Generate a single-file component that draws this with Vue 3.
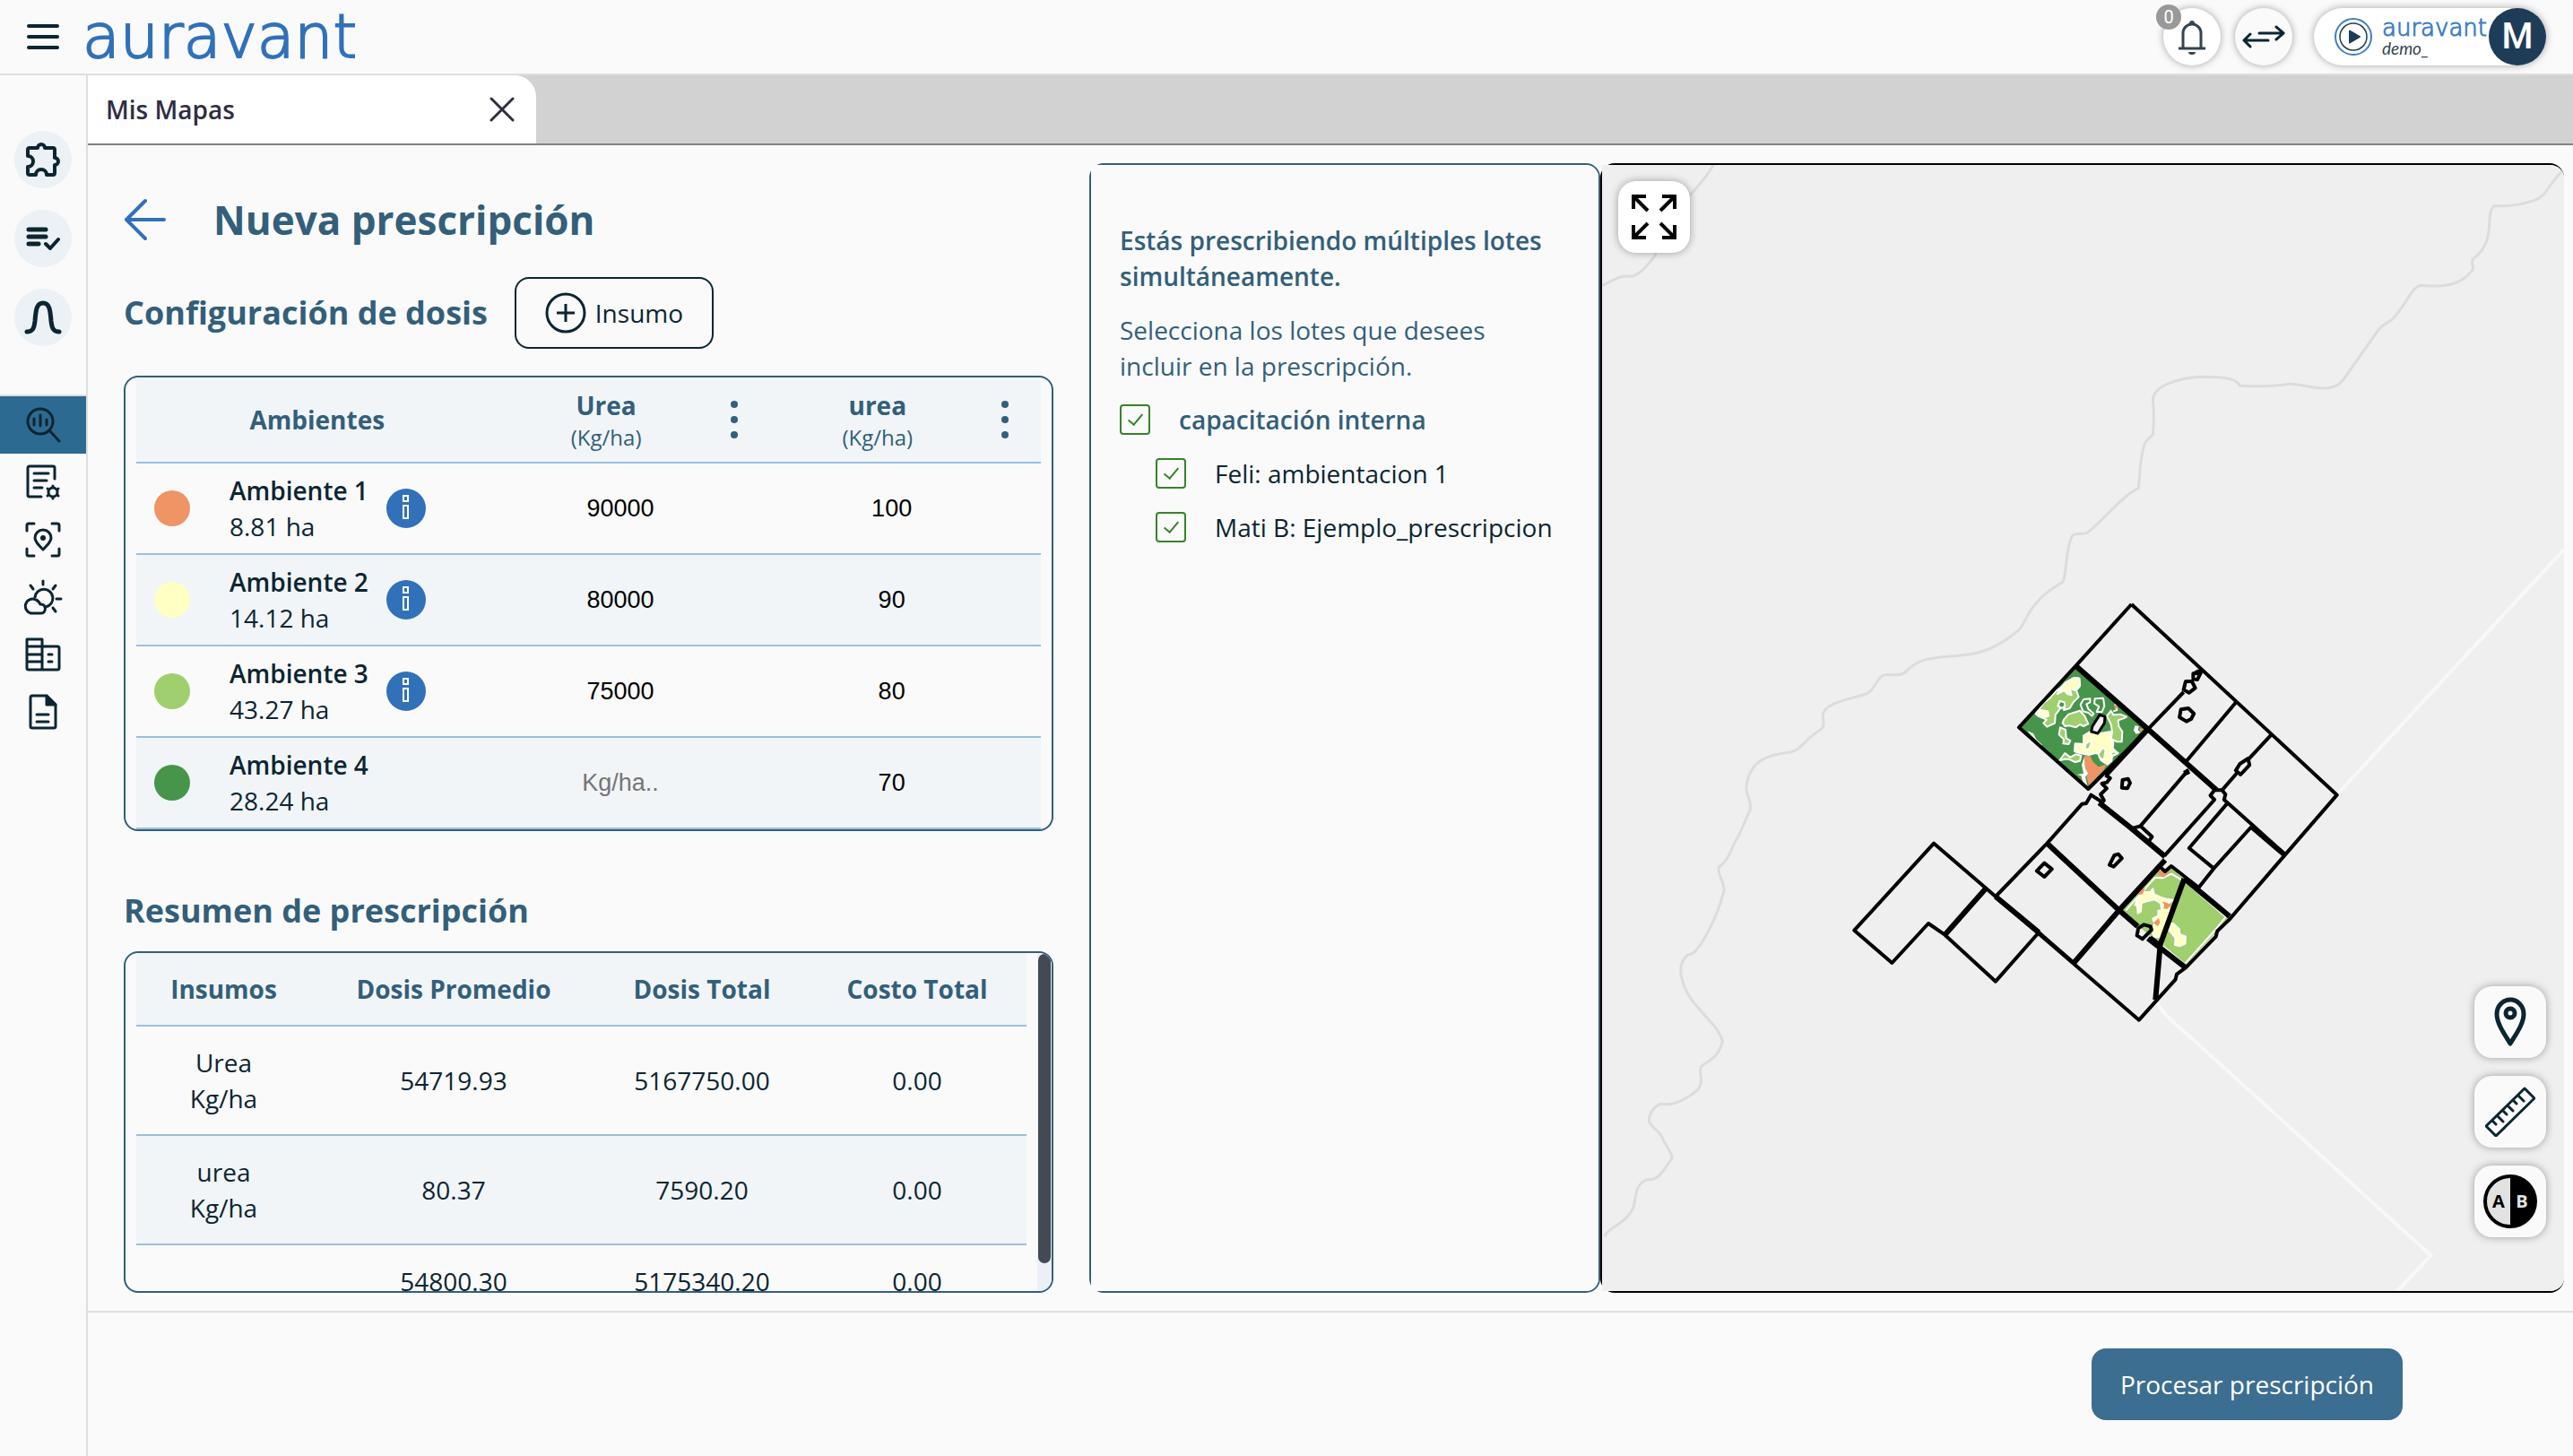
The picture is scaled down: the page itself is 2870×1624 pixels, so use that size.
<script setup>
import { ref, reactive } from 'vue'

const environments = reactive([
  { name: 'Ambiente 1', area: '8.81 ha', color: '#ef9464', info: true, doses: ['90000', '100'] },
  { name: 'Ambiente 2', area: '14.12 ha', color: '#ffffc3', info: true, doses: ['80000', '90'] },
  { name: 'Ambiente 3', area: '43.27 ha', color: '#a0cf6e', info: true, doses: ['75000', '80'] },
  { name: 'Ambiente 4', area: '28.24 ha', color: '#47954a', info: false, doses: ['', '70'] },
])
const inputs = ['Urea', 'urea']
const summary = [
  { name: 'Urea', unit: 'Kg/ha', avg: '54719.93', total: '5167750.00', cost: '0.00' },
  { name: 'urea', unit: 'Kg/ha', avg: '80.37', total: '7590.20', cost: '0.00' },
  { name: '', unit: '', avg: '54800.30', total: '5175340.20', cost: '0.00' },
]
const allLots = ref(true)
const lots = reactive([
  { id: 'lot-1', label: 'Feli: ambientacion 1', on: true },
  { id: 'lot-2', label: 'Mati B: Ejemplo_prescripcion', on: true },
])
</script>

<template>
  <div class="app">
    <header class="topbar">
      <button class="menu" aria-label="Menú"><span></span><span></span><span></span></button>
      <a class="brand" href="#">auravant</a>
      <div class="top-actions">
        <button class="round white" aria-label="Notificaciones">
          <svg width="32" height="40" viewBox="0 0 32 40" fill="none" stroke="#33454f" stroke-width="3">
            <path d="M1 33h30" /><path d="M6 33V16a10 10 0 0 1 20 0v17" />
            <path d="M13 5a3 3 0 0 1 6 0v2h-6z" fill="#33454f" stroke="none" />
            <path d="M12 37h8a4 3 0 0 1-8 0z" fill="#33454f" stroke="none" />
          </svg>
          <span class="badge">0</span>
        </button>
        <button class="round" aria-label="Cambiar cuenta">
          <svg width="48" height="28" viewBox="0 0 48 28" fill="none" stroke="#0c2532" stroke-width="3" stroke-linecap="round" stroke-linejoin="round">
            <path d="M19 10h26M38 3l8 7-8 7M29 18H3M9 11l-7 7 7 7" />
          </svg>
        </button>
        <button class="account">
          <svg width="44" height="44" viewBox="0 0 44 44" fill="none">
            <circle cx="22" cy="22" r="20" stroke="#3f7fc4" stroke-width="2" />
            <circle cx="22" cy="22" r="15" stroke="#1d3c58" stroke-width="1.5" />
            <path d="M18 15.500v13l11-6.500z" fill="#1d3c58" stroke="#1d3c58" stroke-width="2" stroke-linejoin="round" />
          </svg>
          <span class="account-name"><span class="mini-brand">auravant</span><span class="demo">demo_</span></span>
          <span class="avatar">M</span>
        </button>
      </div>
    </header>

    <div class="body">
      <nav class="sidebar">
        <div class="side-top">
          <a href="#" class="bubble" aria-label="Extensiones">
            <svg width="38" height="38" viewBox="0 0 38 38" fill="none" stroke="#0c2532" stroke-width="4" stroke-linejoin="round">
              <path d="M2 8a2 2 0 0 1 2-2h9a4 4 0 0 1 8 0h9a2 2 0 0 1 2 2v9a4 4 0 0 1 0 8v9a2 2 0 0 1-2 2h-7a6 6 0 0 0-12 0H4a2 2 0 0 1-2-2v-7a6 6 0 0 0 0-12z" />
            </svg>
          </a>
          <a href="#" class="bubble" aria-label="Tareas">
            <svg width="38" height="28" viewBox="0 0 38 28" fill="none" stroke="#0c2532" stroke-width="5" stroke-linecap="round" stroke-linejoin="round">
              <path d="M3 4h19M3 12h19M3 20h11" /><path d="M22 20l5 5 9-10" stroke-width="4" />
            </svg>
          </a>
          <a href="#" class="bubble" aria-label="Distribución">
            <svg width="42" height="38" viewBox="0 0 42 38" fill="none" stroke="#0c2532" stroke-width="5" stroke-linecap="round">
              <path d="M3 35c6 0 8-3 9-12C13 10 14 3 21 3s8 7 9 20c1 9 3 12 9 12" />
            </svg>
          </a>
        </div>
        <a href="#" class="side-item active" aria-label="Análisis">
          <svg width="40" height="40" viewBox="0 0 40 40" fill="none" stroke="#0c2532" stroke-width="3" stroke-linecap="round">
            <circle cx="17" cy="16" r="14" /><path d="M27 26l11 12" /><path d="M10 13v7M17 9v12M24 14v6" />
          </svg>
        </a>
        <a href="#" class="side-item" aria-label="Órdenes">
          <svg width="42" height="42" viewBox="0 0 42 42" fill="none" stroke="#0c2532" stroke-width="3" stroke-linecap="round">
            <path d="M34 17V5a2 2 0 0 0-2-2H6a2 2 0 0 0-2 2v30a2 2 0 0 0 2 2h13" />
            <path d="M11 11h16M11 19h14M11 27h9" />
            <circle cx="32" cy="32" r="5" stroke-width="3" />
            <path d="M32 25v1M32 38v1M38 28l-1 1M27 35l-1 1M26 28l1 1M37 35l1 1" />
          </svg>
        </a>
        <a href="#" class="side-item" aria-label="Ubicación">
          <svg width="40" height="40" viewBox="0 0 40 40" fill="none" stroke="#0c2532" stroke-width="3" stroke-linecap="round" stroke-linejoin="round">
            <path d="M2 10V4a2 2 0 0 1 2-2h6M30 2h6a2 2 0 0 1 2 2v6M38 30v6a2 2 0 0 1-2 2h-6M10 38H4a2 2 0 0 1-2-2v-6" />
            <path d="M20 31c-5-5-9-9-9-13a9 9 0 0 1 18 0c0 4-4 8-9 13z" /><circle cx="20" cy="18" r="3" fill="#0c2532" stroke="none" />
          </svg>
        </a>
        <a href="#" class="side-item" aria-label="Clima">
          <svg width="44" height="40" viewBox="0 0 44 40" fill="none" stroke="#0c2532" stroke-width="3" stroke-linecap="round" stroke-linejoin="round">
            <path d="M13 20a10 10 0 1 1 12 11" /><path d="M22 2v4M8 7l3 4M36 7l-3 4M37 22h5M33 32l3 4" />
            <path d="M9 38a8 8 0 1 1 5-15c3 1 4 3 5 5 7-1 7 10 1 10z" />
          </svg>
        </a>
        <a href="#" class="side-item" aria-label="Empresa">
          <svg width="40" height="38" viewBox="0 0 40 38" fill="none" stroke="#0c2532" stroke-width="3" stroke-linecap="round" stroke-linejoin="round">
            <path d="M2 2h17v34H4a2 2 0 0 1-2-2zM19 10h17a2 2 0 0 1 2 2v22a2 2 0 0 1-2 2H19M2 10h17M2 19h17M2 27h17M26 19h4M26 27h4" />
          </svg>
        </a>
        <a href="#" class="side-item" aria-label="Documentos">
          <svg width="32" height="40" viewBox="0 0 32 40" fill="none" stroke="#0c2532" stroke-width="3" stroke-linecap="round" stroke-linejoin="round">
            <path d="M20 2H4a2 2 0 0 0-2 2v32a2 2 0 0 0 2 2h24a2 2 0 0 0 2-2V12zM9 23h13M9 31h13" />
            <path d="M20 2v10h10z" fill="#0c2532" />
          </svg>
        </a>
      </nav>

      <main class="main">
        <div class="tabs">
          <div class="tab">
            <span>Mis Mapas</span>
            <button class="tab-close" aria-label="Cerrar">
              <svg width="28" height="28" viewBox="0 0 28 28" fill="none" stroke="#2f2e41" stroke-width="3" stroke-linecap="round"><path d="M2 2l24 24M26 2L2 26" /></svg>
            </button>
          </div>
        </div>

        <div class="content">
          <section class="left">
            <div class="title-row">
              <button class="back" aria-label="Volver">
                <svg width="48" height="48" viewBox="0 0 48 48" fill="none" stroke="#3171b9" stroke-width="4" stroke-linecap="round" stroke-linejoin="round"><path d="M24 3L3 24l21 21M3 24h42" /></svg>
              </button>
              <h1>Nueva prescripción</h1>
            </div>
            <div class="config-row">
              <h2>Configuración de dosis</h2>
              <button class="add">
                <svg width="46" height="46" viewBox="0 0 46 46" fill="none" stroke="#0c2532" stroke-width="3"><circle cx="23" cy="23" r="21" /><path d="M13 23h20M23 13v20" /></svg>
                Insumo
              </button>
            </div>
            <div class="box">
              <table class="doses">
                <colgroup><col class="c-env" /><col class="c-dose" /><col class="c-dose" /></colgroup>
                <thead>
                  <tr>
                    <th scope="col" class="env-head">Ambientes</th>
                    <th v-for="(n, i) in inputs" :key="i" scope="col">
                      <div class="dose-head">
                        <span class="dose-name">{{ n }}<small>(Kg/ha)</small></span>
                        <button class="kebab" aria-label="Opciones"><i></i><i></i><i></i></button>
                      </div>
                    </th>
                  </tr>
                </thead>
                <tbody>
                  <tr v-for="e in environments" :key="e.name">
                    <td>
                      <div class="env">
                        <span class="dot" :style="{ background: e.color }"></span>
                        <div class="env-text"><b>{{ e.name }}</b><span>{{ e.area }}</span></div>
                        <button v-if="e.info" class="info" aria-label="Información">
                          <svg width="44" height="44" viewBox="0 0 44 44"><circle cx="22" cy="22" r="22" fill="#3171b9" /><g fill="none" stroke="#fff" stroke-width="2"><rect x="19" y="8" width="5" height="6" /><rect x="19" y="19" width="5" height="14" /></g></svg>
                        </button>
                      </div>
                    </td>
                    <td v-for="(n, i) in inputs" :key="i">
                      <input v-model="e.doses[i]" type="text" placeholder="Kg/ha.." :aria-label="n + ' ' + e.name" />
                    </td>
                  </tr>
                </tbody>
              </table>
            </div>
            <h2 class="summary-title">Resumen de prescripción</h2>
            <div class="box summary-box">
              <table class="summary">
                <colgroup><col class="s1" /><col class="s2" /><col class="s3" /><col class="s4" /></colgroup>
                <thead>
                  <tr><th scope="col">Insumos</th><th scope="col">Dosis Promedio</th><th scope="col">Dosis Total</th><th scope="col">Costo Total</th></tr>
                </thead>
                <tbody>
                  <tr v-for="(s, i) in summary" :key="i">
                    <td>{{ s.name }}<br v-if="s.unit" />{{ s.unit }}</td>
                    <td>{{ s.avg }}</td><td>{{ s.total }}</td><td>{{ s.cost }}</td>
                  </tr>
                </tbody>
              </table>
              <div class="track"><div class="thumb"></div></div>
            </div>
          </section>

          <section class="lots">
            <div class="lots-body">
              <p class="lead">Estás prescribiendo múltiples lotes simultáneamente.</p>
              <p>Selecciona los lotes que desees incluir en la prescripción.</p>
              <div class="check group">
                <input id="all-lots" v-model="allLots" type="checkbox" /><label for="all-lots">capacitación interna</label>
              </div>
              <div v-for="l in lots" :key="l.id" class="check child">
                <input :id="l.id" v-model="l.on" type="checkbox" /><label :for="l.id">{{ l.label }}</label>
              </div>
            </div>
          </section>

          <section class="map">
            <svg class="map-canvas" viewBox="1787 184 1073 1256" preserveAspectRatio="xMidYMid slice">
              <g class="river" transform="translate(1760 160) scale(.70791 .82906)">
                <path d="M214 28C200 50 180 66 168 78M124 148C112 162 100 176 84 179C70 176 56 184 38 191" />
                <path d="M1553 36C1530 52 1528 72 1505 77C1480 84 1462 85 1444 84C1434 90 1438 110 1434 124C1430 142 1420 148 1410 156C1406 164 1416 166 1406 174C1390 190 1365 194 1326 191C1312 196 1308 214 1284 236C1276 242 1270 242 1262 250L1206 318C1196 330 1180 330 1168 329C1150 328 1130 322 1116 324C1090 328 1066 327 1044 326C1036 318 1030 314 980 314C950 316 906 324 906 346C908 364 908 370 906 392C890 404 892 406 889 418C884 440 886 450 883 464C860 472 820 514 802 524C790 528 780 520 776 534C768 556 770 580 764 590C740 602 726 612 712 630C700 648 700 652 690 658C664 676 640 686 610 688C570 692 540 690 520 708C508 720 496 712 480 716C470 722 466 736 456 740C430 748 386 752 386 770C388 784 388 786 380 790C360 800 350 818 334 819C300 822 272 830 266 862C262 878 276 882 271 898C262 912 258 926 250 936C240 950 240 962 222 974C220 986 232 994 230 1006C220 1040 196 1080 180 1090C164 1092 160 1110 163 1120C170 1160 220 1180 228 1208C220 1234 200 1236 194 1242C190 1254 200 1262 188 1274C174 1284 150 1296 130 1292C116 1298 112 1306 112 1316C120 1328 132 1330 134 1340C142 1352 150 1362 148 1366C134 1382 128 1396 108 1394C90 1402 92 1414 88 1430C80 1450 56 1456 45 1466L42 1471" />
              </g>
              <g class="road" transform="translate(1760 160) scale(.70791 .82906)">
                <path d="M1553 547L1196 876M912 1156C930 1180 950 1190 970 1206L1344 1496L1290 1545" />
              </g>
              <g transform="translate(2220 700) scale(.33333)">
                <path d="M288 132L524 340L328 540L96 332z" fill="#47954a" />
                <g stroke="#fff" stroke-width="2" stroke-linejoin="round">
                  <path fill="#a0cf6e" d="M280 168L298 170L300 196L288 210L296 232L278 250L266 270L246 276L250 262L232 246L226 262L236 268L218 292L216 320L190 332L178 320L188 308L160 296L152 288L180 250L200 236L220 212L238 200L252 184z" />
                  <path fill="#a0cf6e" d="M246 308L262 290L288 282L300 278L316 296L328 322L312 330L300 324L286 334L264 328L250 330L242 320z" />
                  <path fill="#a0cf6e" d="M234 334L252 342L254 370L268 378L262 390L244 388L246 374L230 358z" />
                  <path fill="#a0cf6e" d="M404 278L412 292L434 290L456 298L446 304L428 310L430 330L442 348L440 382L424 382L404 372L408 350L404 324L390 296z" />
                  <path fill="#a0cf6e" d="M232 444L250 420L268 434L286 424L304 428L300 446L284 450L262 440L250 440z" />
                  <path fill="#ffffc3" d="M280 168L298 170L300 190L284 210L266 202L272 226L258 222L248 210L224 222L238 200L252 184zM160 290L166 276L192 280L196 296L176 302z" />
                  <path fill="#ffffc3" d="M312 362L334 348L352 356L380 352L404 348L404 372L412 384L410 404L426 420L408 430L406 446L392 458L370 444L366 424L352 420L330 426L300 420L282 414L284 388L312 390z" />
                  <path fill="#a0cf6e" d="M342 374L330 408L316 406L320 388zM376 402L386 410L380 442L366 436L362 422zM412 414L428 420L412 428L400 424z" />
                  <path fill="#47954a" d="M232 246L248 250L250 262L240 270L228 262z" />
                  <path fill="none" d="M334 238L312 240L302 258L310 280L330 286L340 296L346 288L328 272L322 256L334 250zM350 238L378 236L382 262L374 282L356 282L364 264L348 254zM418 254L424 276L412 280" />
                </g>
                <path d="M314 430L334 428L344 450L362 466L388 458L380 476L330 528L322 500L328 488L318 472z" fill="#ef9464" />
                <path d="M414 258l12 4-8 16zM500 336l14 4-14 12z" fill="#ef9464" />
                <path d="M314 434L318 472L328 488L318 500L326 532L310 518L304 496L290 492L312 488L306 460zM484 328l14 2-4 12 8 10-14 4-8-12zM124 346l20 8 10 20 20 18-4 4z" fill="#fff" />
                <path d="M366 292l18 6-2 22-22 34-22-6 4-18z" fill="#efefef" stroke="#000" stroke-width="3" stroke-linejoin="round" />
              </g>
              <g transform="translate(2320 920) scale(.33333)">
                <path d="M262 152L288 156L306 144L346 180L500 310L350 474L270 400L134 288z" fill="#a0cf6e" />
                <g fill="none" stroke="#fff" stroke-width="2" stroke-linejoin="round">
                  <path d="M154 286L252 176L276 178L306 164L340 184M352 190L488 308L456 348L350 466L276 404" />
                  <path fill="#ffffc3" d="M192 250L214 226L236 224L244 214L248 232L274 244L290 248L312 252L296 262L300 290L286 340L276 404L268 376L246 374L242 350L250 330L244 314L262 304L262 288L274 284L270 262L250 250L230 254L206 262L204 290L194 296L192 270L184 268zM298 330L312 330L332 348L334 366L354 374L352 398L334 406L318 402L320 380L302 356L292 350z" />
                </g>
                <path fill="#ef9464" d="M262 152l28 8 20-8-30 24-18-10zM188 236l20-26 10 2-8 20zM274 256l32 10-14 16-12-2 2-14zM246 328l18-16 4 16-8 12zM240 344l6 2-2 14zM454 350l8-4-4 14z" />
              </g>
              <g class="fields" transform="translate(2040 650) scale(.38265 .33333)">
                <path d="M882 72L1481 710L1330 910L1168 1126L1132 1166L1128 1184L1040 1288L1014 1310L1010 1328L904 1463L486 1050L636 872L738 740L750 738L764 710L802 738M882 72L720 278L554 484L756 690L930 490" />
                <path d="M1090 294L1076 296L1064 304M1034 366L930 490L1040 600L1188 398M1290 508L1222 592M1190 636L1146 694L1156 708L1152 726L1240 816L1330 910" />
                <path d="M806 644L820 654L810 668L796 672L810 688L792 708L802 728L788 736M1048 626L908 814L884 822M908 814L942 850L932 866M1146 694L1124 694L1112 712L1124 726L978 914M1160 740L1050 888L1122 956L1232 816M1122 956L1078 1020" />
                <path d="M486 1050L458 1022L306 872L74 1163L184 1272L290 1140L338 1178L486 1334L612 1170L714 1272M966 952L980 966L998 948L1078 1020" />
              </g>
              <g class="fields thin" transform="translate(2040 650) scale(.38265 .33333)">
                <path d="M1040 330L1058 330L1068 352L1050 368L1034 358zM1062 304L1084 302L1074 324L1062 322zM1026 424L1048 420L1064 438L1056 456L1042 464L1022 450zM1222 588L1226 610L1200 642L1186 628L1198 606zM856 660L872 656L878 670L870 688L854 686zM832 912L844 908L854 922L830 950L818 944zM628 938L650 958L628 984L606 964zM918 1144L938 1150L940 1162L914 1192L898 1180L902 1156z" />
              </g>
              <g class="fields thick" transform="translate(2040 650) scale(.38265 .33333)">
                <path d="M720 278L930 490L1130 694M930 490L806 644M788 736L880 820L980 916M980 928L846 1096L714 1272M636 872L846 1096L900 1150M930 1190L1040 1288M458 1022L338 1178M486 1050L612 1170M1036 990L1168 1116M1036 990L966 1210L952 1396M1232 816L1330 912" />
                <path d="M960 1210l-24-22M1050 630l-14 8" />
              </g>
            </svg>
            <button class="map-btn expand" aria-label="Pantalla completa">
              <svg width="52" height="52" viewBox="0 0 52 52" fill="none" stroke="#000" stroke-width="4"><path d="M3 17V3h14M3 3l16 16M35 3h14v14M49 3L33 19M3 35v14h14M3 49l16-16M49 35v14H35M49 49L33 33" /></svg>
            </button>
            <div class="map-tools">
              <button class="map-btn" aria-label="Marcador">
                <svg width="36" height="56" viewBox="0 0 36 56" fill="none" stroke="#0c2532" stroke-width="5" stroke-linejoin="round"><path d="M18 52C12 42 3 30 3 19a15 16 0 0 1 30 0c0 11-9 23-15 33z" /><circle cx="18" cy="18" r="5" /></svg>
              </button>
              <button class="map-btn" aria-label="Medir">
                <svg width="56" height="56" viewBox="0 0 56 56" fill="none" stroke="#0c2532" stroke-width="3" stroke-linejoin="round" stroke-linecap="round"><path d="M44 2l11 11-43 42L1 44zM8 38l4 4M14 33l6 6M20 27l4 4M25 21l6 6M31 15l4 4M37 10l6 6" /></svg>
              </button>
              <button class="map-btn" aria-label="Comparar">
                <span class="compare"><span>A</span><span>B</span></span>
              </button>
            </div>
          </section>
        </div>

        <footer class="footer"><button class="process">Procesar prescripción</button></footer>
      </main>
    </div>
  </div>
</template>

<style>
body { margin: 0; background: #fafafa; }
</style>

<style scoped>
* { box-sizing: border-box; }
.app { height: 100vh; display: flex; flex-direction: column; background: #fafafa; color: #0c2532; font-family: "Open Sans", "Noto Sans", sans-serif; font-size: 28px; line-height: 40px; overflow: hidden; }
button { font: inherit; color: inherit; padding: 0; border: 0; background: none; cursor: pointer; }
svg { display: block; flex: none; }
h1, h2, p { margin: 0; }

.topbar { flex: none; height: 84px; display: flex; align-items: center; padding: 0 30px; border-bottom: 2px solid #dedede; }
.menu { display: flex; flex-direction: column; gap: 8px; width: 36px; }
.menu span { height: 4px; border-radius: 2px; background: #0c2532; }
.brand { margin-left: 26px; font-family: "DejaVu Sans", sans-serif; font-weight: 200; font-size: 68px; line-height: 80px; color: #3171b9; text-decoration: none; -webkit-text-stroke: 2px #3171b9; }
.top-actions { margin-left: auto; display: flex; gap: 16px; }
.round { position: relative; width: 64px; height: 64px; border-radius: 50%; display: grid; place-items: center; background: #fafafa; box-shadow: 0 0 8px rgba(0, 0, 0, .35); }
.white { background: #fff; }
.badge { position: absolute; left: -8px; top: -4px; width: 28px; height: 28px; border-radius: 50%; background: #999; color: #fff; font: 20px/28px Roboto, sans-serif; text-align: center; }
.account { margin-left: 8px; height: 64px; border-radius: 32px; display: flex; align-items: center; padding-left: 22px; background: #fff; box-shadow: 0 0 8px rgba(0, 0, 0, .35); }
.account-name { width: 119px; margin-left: 10px; display: flex; flex-direction: column; text-align: left; }
.mini-brand { font-family: "DejaVu Sans", sans-serif; font-weight: 200; font-size: 26px; line-height: 26px; color: #3f7fc4; -webkit-text-stroke: 1px #3f7fc4; }
.demo { font-family: Lato, sans-serif; font-style: italic; font-size: 19px; line-height: 20px; color: #33454f; }
.avatar { width: 64px; height: 64px; border-radius: 50%; background: #1d3c58; color: #fff; font: 500 40px/64px Roboto, sans-serif; text-align: center; }

.body { flex: 1; min-height: 0; display: flex; }
.sidebar { flex: none; width: 98px; border-right: 2px solid #dedede; }
.side-top { height: 358px; padding-top: 62px; display: flex; flex-direction: column; align-items: center; gap: 24px; border-bottom: 2px solid #dedede; }
.bubble { width: 64px; height: 64px; border-radius: 50%; background: #ebf1f4; display: grid; place-items: center; }
.side-item { height: 64px; display: grid; place-items: center; }
.active { background: #2d6a92; }

.main { flex: 1; min-width: 0; display: flex; flex-direction: column; }
.tabs { flex: none; height: 78px; background: #d2d2d2; border-bottom: 2px solid #808080; display: flex; }
.tab { width: 500px; padding: 0 24px 0 20px; display: flex; align-items: center; justify-content: space-between; background: #fff; border-radius: 0 24px 0 0; color: #2f2e41; font-weight: 600; }
.content { flex: 1; min-height: 0; display: grid; grid-template-columns: minmax(0, 1037fr) 40px minmax(0, 570fr) minmax(0, 1075fr); padding: 20px 10px 20px 40px; }
.left { display: flex; flex-direction: column; min-height: 0; }
.title-row { flex: none; height: 127px; padding-bottom: 2px; display: flex; align-items: center; gap: 52px; }
h1, h2 { color: #335f7a; font-weight: 700; }
h1 { font-size: 44px; line-height: 60px; }
h2 { font-size: 36px; line-height: 48px; }
.config-row { flex: none; height: 80px; margin-bottom: 30px; display: flex; align-items: center; gap: 30px; }
.add { width: 222px; height: 80px; border: 2px solid #0c2532; border-radius: 16px; display: flex; align-items: center; justify-content: center; gap: 10px; }
.box { flex: none; border: 2px solid #335f7a; border-radius: 16px; padding: 0 12px; }
table { width: 100%; border-collapse: separate; border-spacing: 0; table-layout: fixed; }
th, td { padding: 0; border-bottom: 2px solid #9bbfdf; text-align: center; }
th { color: #335f7a; font-weight: 700; background: #f1f5f8; }
tbody tr:nth-child(even) { background: #f1f5f8; }
.c-env { width: 40%; }
.doses th { height: 96px; }
.doses td { height: 102px; }
.dose-head { display: flex; align-items: center; }
.dose-name { width: 241px; padding-top: 3px; display: flex; flex-direction: column; line-height: 36px; }
.dose-name small { font-size: 24px; font-weight: 400; }
.kebab { width: 44px; display: flex; flex-direction: column; align-items: center; gap: 9px; }
.kebab i { width: 8px; height: 8px; border-radius: 50%; background: #335f7a; }
.env { display: flex; align-items: center; padding-left: 20px; }
.dot { width: 40px; height: 40px; border-radius: 50%; }
.env-text { width: 175px; margin-left: 44px; display: flex; flex-direction: column; text-align: left; }
.env-text b { font-weight: 600; }
.doses input { width: 140px; height: 48px; padding: 0; margin-right: 30px; border: 0; background: transparent; text-align: center; color: #000; font: 27px "Liberation Sans", Arial, sans-serif; outline: none; }
.doses input::placeholder { color: #757575; }
.summary-title { flex: none; margin: 65px 0 21px; }
.summary-box { flex: 1; min-height: 0; position: relative; overflow: hidden; padding-right: 28px; }
.summary th { height: 82px; }
.summary td { height: 122px; }
.summary tr:last-child td { height: 82px; }
.s1 { width: 195px; }
.s2 { width: 318px; }
.s3 { width: 236px; }
.track { position: absolute; right: 0; top: 0; bottom: 0; width: 16px; padding: 1px; background: #ebf0f7; }
.thumb { height: 92%; border-radius: 8px; background: #434a54; }

.lots { grid-column: 3; border: 2px solid #335f7a; border-radius: 16px; }
.lots-body { height: 100%; padding: 64px 32px; background: #fafafa; border-radius: 0 14px 14px 0; color: #335f7a; }
.lots p { margin: 0 30px 20px 0; }
.lots .lead { font-weight: 600; }
.check { display: flex; align-items: center; gap: 32px; margin-bottom: 20px; white-space: nowrap; }
.group { font-weight: 600; }
.child { padding-left: 40px; color: #0c2532; }
.check input { appearance: none; flex: none; margin: 0; width: 34px; height: 34px; border: 2px solid #37832a; border-radius: 4px; display: grid; place-items: center; }
.check input:checked::before { content: ""; width: 7px; height: 14px; margin-bottom: 4px; border: solid #37832a; border-width: 0 2px 2px 0; transform: rotate(40deg); }

.map { position: relative; border: solid #000; border-width: 2px 0 2px 2px; border-radius: 16px; }
.map-canvas { width: 100%; height: 100%; background: #efefef; border-radius: 0 16px 16px 0; }
.map-canvas path { vector-effect: non-scaling-stroke; }
.river path { fill: none; stroke: #dcdcdd; stroke-width: 3px; }
.road path { fill: none; stroke: #f8f8f8; stroke-width: 4px; }
.fields path { fill: none; stroke: #000; stroke-width: 4px; stroke-linejoin: round; }
.thick path { stroke-width: 6px; }
.thin path { stroke-width: 4px; }
.map-btn { width: 80px; height: 80px; border-radius: 20px; background: #fafafa; display: grid; place-items: center; box-shadow: 0 0 10px rgba(0, 0, 0, .35); }
.expand { position: absolute; left: 18px; top: 18px; background: #fff; }
.map-tools { position: absolute; right: 20px; bottom: 60px; display: flex; flex-direction: column; gap: 20px; }
.compare { width: 60px; height: 60px; border-radius: 50%; border: 4px solid #000; background: linear-gradient(90deg, #e2e2e2 50%, #000 50%); display: flex; align-items: center; font-size: 20px; font-weight: 700; line-height: 24px; color: #000; }
.compare span { flex: 1; text-align: center; }
.compare span + span { color: #e2e2e2; }

.footer { flex: none; height: 162px; border-top: 2px solid #dedede; padding-right: 190px; display: flex; align-items: center; justify-content: flex-end; }
.process { width: 347px; height: 80px; border-radius: 16px; background: #3c6e91; color: #fff; }
</style>
